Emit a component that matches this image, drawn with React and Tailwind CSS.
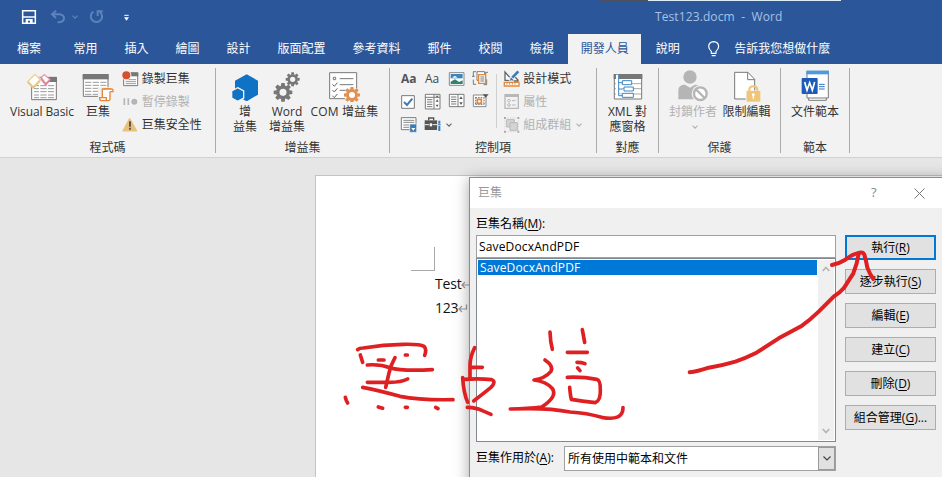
import React from 'react';

const UI = "font-['Open_Sans','Noto_Sans_CJK_TC',sans-serif]";

/* Icon whose drawing units are a third of a pixel. */
function Icon({ x, y, w, h, children, className = '' }) {
  return (
    <svg
      width={w / 3}
      height={h / 3}
      viewBox={`${x} ${y} ${w} ${h}`}
      fill="none"
      className={`block shrink-0 ${className}`}
    >
      {children}
    </svg>
  );
}

function Rows({ x1, x2, ys, c = '#9a9a9a', w = 3 }) {
  return <path d={ys.map((y) => `M${x1} ${y}H${x2}`).join('')} stroke={c} strokeWidth={w} />;
}

function Chevron({ className = '' }) {
  return (
    <svg width="6" height="4" viewBox="0 0 6 4" fill="none" className={`block shrink-0 ${className}`}>
      <path d="M.5 .7 3 3.2 5.5 .7" stroke="currentColor" strokeWidth="1.1" />
    </svg>
  );
}

/* ---------- ribbon icons ---------- */
const VisualBasicIcon = () => (
  <Icon x={75} y={15} w={96} h={90}>
    <path d="M92 34H166V101H92Z" fill="#fff" stroke="#777" strokeWidth="3" />
    <path d="M140 33H168V48H140Z" fill="#777" />
    <Rows x1={99} x2={159} ys={[59, 68, 77, 87, 95]} />
    <path d="M116 55V98M139 55V98" stroke="#fff" strokeWidth="4" />
    <path d="M78 46 102 20 122 41 97 70Z" fill="#f2f2f2" />
    <path d="M81 46 102 25 117 41 97 62Z" fill="#fff" stroke="#ecd08e" strokeWidth="4" />
    <path d="M79 46 97 62 118 42V47L97 69L79 51Z" fill="#e6c579" />
    <path d="M121 34 130 26 146 40 134 53Z" fill="#fff" stroke="#e79db0" strokeWidth="4" />
    <path d="M119 34 134 52 148 40V44L134 60L119 41Z" fill="#e2829b" />
  </Icon>
);

const MacrosIcon = () => (
  <Icon x={247} y={15} w={97} h={93}>
    <path d="M251 26H325V91H251Z" fill="#fff" stroke="#777" strokeWidth="3" />
    <path d="M249 24H327V40H249Z" fill="#777" />
    <Rows x1={256} x2={320} ys={[49, 58, 67, 76, 85]} />
    <path d="M277 45V88M300 45V88" stroke="#fff" strokeWidth="4" />
    <path d="M295 64H344V108H295Z" fill="#f2f2f2" />
    <path d="M308 94V69H331V100Q331 104 326 104H304Q299 103 300 95H320V103" fill="#fff" stroke="#e58636" strokeWidth="4" />
    <path d="M312 69H335Q341 69 340 77H331" fill="#fff" stroke="#e58636" strokeWidth="4" />
  </Icon>
);

const RecordIcon = () => (
  <Icon x={365} y={17} w={50} h={48}>
    <path d="M370 23H412V61H370Z" fill="#fff" stroke="#777" strokeWidth="3" />
    <path d="M392 21H414V33H392Z" fill="#777" />
    <Rows x1={376} x2={407} ys={[43, 49, 55]} />
    <circle cx="378" cy="30" r="15" fill="#f2f2f2" />
    <circle cx="378" cy="30" r="12" fill="#d4502f" />
  </Icon>
);

const PauseIcon = () => (
  <Icon x={365} y={88} w={50} h={48}>
    <path d="M372 101V121M384 101V121" stroke="#b5b5b5" strokeWidth="5" />
    <circle cx="402" cy="111" r="9" fill="#b5b5b5" />
  </Icon>
);

const WarningIcon = () => (
  <Icon x={365} y={157} w={50} h={48}>
    <path d="M388 163 408 198H369Z" fill="#e9c07c" stroke="#e9c07c" strokeWidth="5" strokeLinejoin="round" />
    <path d="M389 170V186M389 189V195" stroke="#444" strokeWidth="5" />
  </Icon>
);

const AddInsIcon = () => (
  <Icon x={15} y={15} w={85} h={92}>
    <path d="M62 25 96 44V86L62 106 27 86V44Z" fill="#0f72c4" />
    <path d="M35 65 53 75V96L35 106 17 96V75Z" fill="#0f72c4" stroke="#f2f2f2" strokeWidth="4" />
  </Icon>
);

function Gear({ cx, cy, r, color, hole = '#f2f2f2' }) {
  return (
    <g>
      <circle cx={cx} cy={cy} r={r * 0.56} stroke={color} strokeWidth={r * 0.36} fill={hole} />
      {[0, 45, 90, 135, 180, 225, 270, 315].map((a) => (
        <path
          key={a}
          d={`M${cx - r * 0.18} ${cy - r}H${cx + r * 0.18}L${cx + r * 0.23} ${cy - r * 0.66}H${cx - r * 0.23}Z`}
          fill={color}
          transform={`rotate(${a} ${cx} ${cy})`}
        />
      ))}
    </g>
  );
}

const GearsIcon = () => (
  <Icon x={145} y={15} w={84} h={97}>
    <Gear cx={204} cy={43} r={21} color="#777" />
    <Gear cx={175} cy={82} r={28} color="#777" />
  </Icon>
);

const ComIcon = () => (
  <Icon x={312} y={15} w={99} h={97}>
    <path d="M317 23H398V101H317Z" fill="#fff" stroke="#777" strokeWidth="3" />
    <path d="M328 37H335V44H328Z" stroke="#777" strokeWidth="3" />
    <path d="M325 58 331 64 340 53M325 75 331 81 340 70M325 92 331 98 340 87" stroke="#666" strokeWidth="3" />
    <path d="M347 41H388M347 59H388M347 76H366" stroke="#777" strokeWidth="3" />
    <circle cx="384" cy="90" r="24" fill="#f6f6f6" />
    <Gear cx={384} cy={90} r={24} color="#e38f4e" hole="#fff" />
  </Icon>
);

const PictureIcon = () => (
  <Icon x={190} y={18} w={51} h={48}>
    <path d="M194 23H238V61H194Z" fill="#fff" stroke="#888" strokeWidth="3" />
    <path d="M198 27H234V40H198Z" fill="#3c87bd" />
    <path d="M203 38Q211 28 218 38Z" fill="#fff" />
    <path d="M198 57V50L211 43 223 51 234 46V57Z" fill="#32826e" />
  </Icon>
);

const BlocksIcon = () => (
  <Icon x={265} y={17} w={50} h={50}>
    <path d="M280 22H303V48H280Z" fill="#fff" stroke="#777" strokeWidth="3" />
    <path d="M277 22H269V37M273 36H265M269 46V60H277M309 45V61H300M313 24H306V30" stroke="#777" strokeWidth="3" />
    <path d="M285 31H306V57H285Z" fill="#fff" stroke="#dc8b42" strokeWidth="4" />
    <Rows x1={290} x2={302} ys={[38, 44, 50]} c="#777" />
  </Icon>
);

const CheckboxIcon = () => (
  <Icon x={48} y={87} w={48} h={48}>
    <path d="M53 92H91V130H53Z" fill="#fff" stroke="#777" strokeWidth="3" />
    <path d="M60 111 69 120 85 101" stroke="#3c7cb5" strokeWidth="6" />
  </Icon>
);

const ComboIcon = () => (
  <Icon x={118} y={85} w={51} h={52}>
    <path d="M122 89H166V133H122ZM148 89V133M122 98H166" fill="#fff" stroke="#777" strokeWidth="3" />
    <Rows x1={127} x2={143} ys={[105, 112, 119, 126]} c="#777" />
    <path d="M152 93H163L157.500 98ZM153 111 157.500 104 162 111ZM153 120 157.500 127 162 120Z" fill="#555" />
  </Icon>
);

const ListIcon = () => (
  <Icon x={190} y={84} w={51} h={52}>
    <path d="M194 88H238V125H194ZM220 88V125" fill="#fff" stroke="#777" strokeWidth="3" />
    <Rows x1={199} x2={215} ys={[96, 103, 110, 117]} c="#777" />
    <path d="M224 102 229 94 234 102ZM224 112 229 120 234 112Z" fill="#555" />
  </Icon>
);

const DateIcon = () => (
  <Icon x={263} y={84} w={51} h={52}>
    <path d="M267 90H305V125H267Z" fill="#fff" stroke="#888" strokeWidth="3" />
    <path d="M273 98H300M273 118H300M274 96V120M299 96V120" stroke="#888" strokeWidth="4" strokeDasharray="5 3" />
    <path d="M279 103H291V115H279Z" fill="#fff" stroke="#df863c" strokeWidth="5" />
    <path d="M295 88H313L304 98Z" fill="#555" />
  </Icon>
);

const DropIcon = () => (
  <Icon x={46} y={155} w={53} h={52}>
    <path d="M50 160H94V196H50Z" fill="#fff" stroke="#777" strokeWidth="3" />
    <Rows x1={56} x2={89} ys={[168, 174]} c="#888" />
    <Rows x1={56} x2={73} ys={[182, 189]} c="#888" />
    <path d="M75 179H96V204H75Z" fill="#3c7cb5" stroke="#f2f2f2" strokeWidth="2" />
    <path d="M80 191H92L86 199Z" fill="#fff" />
  </Icon>
);

const LegacyIcon = () => (
  <Icon x={118} y={155} w={54} h={52}>
    <path d="M120 168H158V197H120Z" fill="#555" />
    <path d="M132 168V161H147V168" stroke="#555" strokeWidth="4" />
    <path d="M120 181H133M143 181H158" stroke="#f2f2f2" strokeWidth="3" />
    <path d="M135 177H142V186H135Z" fill="#fff" />
    <path d="M164 168V203" stroke="#f2f2f2" strokeWidth="12" />
    <path d="M164 169V178M164 184V200" stroke="#3c7cb5" strokeWidth="6" />
    <path d="M160 181H168" stroke="#3c7cb5" strokeWidth="3" />
  </Icon>
);

const DesignIcon = () => (
  <Icon x={355} y={17} w={52} h={51}>
    <path d="M361 23V48H383Z" fill="#fff" stroke="#666" strokeWidth="4" />
    <path d="M402 20 381 42 374 49" stroke="#f2f2f2" strokeWidth="13" />
    <path d="M401 21 383 40" stroke="#3c7cb5" strokeWidth="8" />
    <path d="M379 39 386 46 375 49Z" fill="#3c7cb5" />
    <path d="M392 39 400 47V50H388" stroke="#666" strokeWidth="4" />
    <path d="M359 54H403V65H359Z" fill="#fff" stroke="#e18a3f" strokeWidth="4" />
    <path d="M367 56V61M375 56V61M383 56V61M391 56V61" stroke="#e18a3f" strokeWidth="3" />
  </Icon>
);

const PropsIcon = () => (
  <Icon x={355} y={85} w={52} h={51}>
    <path d="M361 90H401V131H361Z" stroke="#b8b8b8" strokeWidth="4" />
    <path d="M361 93H401" stroke="#b8b8b8" strokeWidth="8" />
    <circle cx="373" cy="108" r="4" stroke="#b8b8b8" strokeWidth="3" />
    <circle cx="373" cy="121" r="4" stroke="#b8b8b8" strokeWidth="3" />
    <path d="M382 108H393M382 121H393" stroke="#b8b8b8" strokeWidth="3" />
  </Icon>
);

const GroupIcon = () => (
  <Icon x={355} y={154} w={52} h={52}>
    <path d="M366 165H389V187H366Z" fill="#d4d4d4" stroke="#b8b8b8" strokeWidth="3" />
    <path d="M376 174H398V197H376Z" fill="#d4d4d4" stroke="#b8b8b8" strokeWidth="3" />
    <path d="M358 157H364V163H358ZM398 157H404V163H398ZM358 198H364V204H358ZM398 198H404V204H398Z" fill="#aaa" />
    <path d="M361 168V194M401 168V194M368 160H394M368 201H394" stroke="#c4c4c4" strokeWidth="2" strokeDasharray="4 4" />
  </Icon>
);

const XmlIcon = () => (
  <Icon x={69} y={20} w={90} h={84}>
    <path d="M73 28H155V101H73Z" fill="#fff" stroke="#777" strokeWidth="3" />
    <path d="M71 26H157V41H71Z" fill="#777" />
    <Rows x1={75} x2={153} ys={[55, 70, 86]} c="#aaa" />
    <path d="M82 28V91H97M82 52H97M82 71H97" stroke="#fff" strokeWidth="8" />
    <path d="M86 27V91H98M86 52H98M86 71H98" stroke="#3f87c3" strokeWidth="3" />
    <path d="M97 46H125V58H97ZM102 65H130V77H102ZM97 84H130V96H97Z" fill="#fff" stroke="#3f87c3" strokeWidth="3" />
  </Icon>
);

const BlockAuthorsIcon = () => (
  <Icon x={260} y={13} w={97} h={100}>
    <circle cx="299" cy="37" r="20" fill="#b5b5b5" />
    <path d="M264 104V77Q264 60 284 60L299 69 314 60Q330 60 334 76V104Z" fill="#b5b5b5" />
    <circle cx="330" cy="87" r="26" fill="#f2f2f2" />
    <circle cx="330" cy="87" r="19" fill="#fff" stroke="#b5b5b5" strokeWidth="7" />
    <path d="M317 74 343 100" stroke="#b5b5b5" strokeWidth="7" />
  </Icon>
);

const RestrictIcon = () => (
  <Icon x={435} y={19} w={84} h={97}>
    <path d="M440 26H480L500 47V106H440Z" fill="#fff" stroke="#777" strokeWidth="3" />
    <path d="M479 26V48H500" stroke="#777" strokeWidth="3" />
    <path d="M473 80H519V116H473Z" fill="#f2f2f2" />
    <path d="M476 82H517V114H476Z" fill="#efc677" />
    <path d="M484 83V77Q485 68 496 68T508 77V83" fill="none" stroke="#efc677" strokeWidth="6" />
    <path d="M496 91V105" stroke="#fff" strokeWidth="4" />
    <circle cx="496" cy="93" r="4" fill="#fff" />
  </Icon>
);

const TemplateIcon = () => (
  <Icon x={628} y={18} w={86} h={95}>
    <path d="M651 27H704V109H651Z" fill="#fff" stroke="#777" strokeWidth="3" />
    <path d="M646 22H710V102H646Z" fill="#fff" stroke="#777" strokeWidth="3" />
    <path d="M644 20H712V31H644Z" fill="#4a9be0" />
    <path d="M682 61H699M682 68H699M682 75H699" stroke="#2f70c4" strokeWidth="3" />
    <rect x="630" y="42" width="48" height="48" rx="3" fill="#1d5bb8" />
    <path d="M639 54 646 79 654 56 662 79 669 54" stroke="#fff" strokeWidth="5" />
  </Icon>
);

/* ---------- ribbon pieces ---------- */
function Group({ width, label, children }) {
  return (
    <div className="flex h-full">
      <div className={`flex flex-col ${width}`}>
        <div className="flex h-[75px]">{children}</div>
        <div className="h-[17px] text-center text-[12px] leading-[17px]">{label}</div>
      </div>
      <div className="mt-1 h-[85px] w-px bg-[#ababab]" />
    </div>
  );
}

function Big({ width, icon, text, disabled, menu }) {
  return (
    <div className={`flex shrink-0 flex-col items-center ${width} ${disabled ? 'text-[#b1b1b1]' : ''}`}>
      <div className="flex h-[40px] items-center pt-1">{icon}</div>
      <span className="whitespace-pre text-center text-[12px] leading-[15px]">{text}</span>
      {menu && <Chevron className="mt-[6px] ml-1" />}
    </div>
  );
}

function Small({ icon, label, disabled, menu }) {
  return (
    <div className={`flex h-[23px] items-center gap-[3px] ${disabled ? 'text-[#b1b1b1]' : ''}`}>
      {icon}
      <span className="whitespace-nowrap text-[12px] leading-4">{label}</span>
      {menu && <Chevron className="ml-[2px]" />}
    </div>
  );
}

const cell = 'flex h-[23px] items-center';

function Ribbon() {
  return (
    <div className="flex h-[94px] border-b border-[#d2d2d2] bg-[#f2f2f2] text-[#333]">
      <Group width="w-[215px]" label="程式碼">
        <Big width="ml-1 w-[76px] tracking-[-0.1px]" icon={<VisualBasicIcon />} text="Visual Basic" />
        <Big width="w-[36px]" icon={<MacrosIcon />} text="巨集" />
        <div className="ml-[6px] pt-[3px]">
          <Small icon={<RecordIcon />} label="錄製巨集" />
          <Small icon={<PauseIcon />} label="暫停錄製" disabled />
          <Small icon={<WarningIcon />} label="巨集安全性" />
        </div>
      </Group>
      <Group width="w-[173px]" label="增益集">
        <Big width="ml-2 w-[42px]" icon={<AddInsIcon />} text={'增\n益集'} />
        <Big width="w-[42px]" icon={<GearsIcon />} text={'Word\n增益集'} />
        <Big width="w-[73px] tracking-[0.15px]" icon={<ComIcon />} text="COM 增益集" />
      </Group>
      <Group width="w-[206px]" label="控制項">
        <div className="ml-[10px] grid h-[72px] grid-cols-[repeat(4,24px)] grid-rows-[repeat(3,23px)] pt-[3px]">
          <div className={`${cell} pl-px text-[12px] font-bold text-[#555]`}>Aa</div>
          <div className={`${cell} pl-px text-[12px] text-[#444]`}>Aa</div>
          <div className={cell}><PictureIcon /></div>
          <div className={cell}><BlocksIcon /></div>
          <div className={cell}><CheckboxIcon /></div>
          <div className={cell}><ComboIcon /></div>
          <div className={cell}><ListIcon /></div>
          <div className={cell}><DateIcon /></div>
          <div className={cell}><DropIcon /></div>
          <div className={`${cell} gap-1 text-[#666]`}><LegacyIcon /><Chevron /></div>
        </div>
        <div className="mt-[10px] h-[54px] w-px bg-[#d0d0d0]" />
        <div className="ml-[6px] pt-[3px]">
          <Small icon={<DesignIcon />} label="設計模式" />
          <Small icon={<PropsIcon />} label="屬性" disabled />
          <Small icon={<GroupIcon />} label="組成群組" disabled menu />
        </div>
      </Group>
      <Group width="w-[61px]" label="對應">
        <Big width="w-full" icon={<XmlIcon />} text={'XML 對\n應窗格'} />
      </Group>
      <Group width="w-[121px]" label="保護">
        <Big width="ml-[7px] w-[54px]" icon={<BlockAuthorsIcon />} text="封鎖作者" disabled menu />
        <Big width="w-[53px]" icon={<RestrictIcon />} text="限制編輯" />
      </Group>
      <Group width="w-[68px]" label="範本">
        <Big width="w-full" icon={<TemplateIcon />} text="文件範本" />
      </Group>
    </div>
  );
}

function TitleBar() {
  return (
    <div className="relative flex h-[34px] items-center bg-[#2b579a] text-[#a9c0e2]">
      <div className="absolute top-0 left-[600px] flex">
        <div className="h-px w-12 bg-[#4c5260]" />
        <div className="h-px w-[193px] bg-[#dcecf8]" />
      </div>
      <Icon x={63} y={27} w={48} h={48} className="ml-[21px]">
        <path d="M68 32H106V70H68Z" stroke="#fff" strokeWidth="4.500" />
        <path d="M68 51H106" stroke="#fff" strokeWidth="4.500" />
        <path d="M77 57H98V70H90V62H84V70H77Z" fill="#fff" />
      </Icon>
      <Icon x={150} y={27} w={48} h={48} className="ml-[13px]">
        <path d="M168 32 156 43 168 54M157 43H177Q192 44 192 55T177 67H173" stroke="#5e83bb" strokeWidth="6" />
      </Icon>
      <Chevron className="ml-[6px] text-[#5e83bb]" />
      <Icon x={267} y={27} w={48} h={48} className="ml-[11px]">
        <path d="M280 35A17 17 0 1 0 300 36M293 48V34H308" stroke="#5e83bb" strokeWidth="6" />
      </Icon>
      <Icon x={369} y={37} w={21} h={27} className="ml-[18px]">
        <path d="M373 44H386" stroke="#fff" strokeWidth="3" />
        <path d="M372 50H387L379.500 60Z" fill="#fff" />
      </Icon>
      <span className="ml-[525px] whitespace-pre text-[12px] leading-4 tracking-[0.1px]">Test123.docm  -  Word</span>
    </div>
  );
}

const tabs = ['常用', '插入', '繪圖', '設計', '版面配置', '參考資料', '郵件', '校閱', '檢視', '開發人員', '說明'];

function Tabs() {
  return (
    <div className="flex h-[30px] items-stretch bg-[#2b579a] text-[12px] leading-[29px] text-white">
      <span className="w-[61px] pl-[17px]">檔案</span>
      <div className="flex gap-[2px]">
        {tabs.map((t) => (
          <span
            key={t}
            className={`px-[12.5px] whitespace-nowrap ${t === '開發人員' ? 'bg-[#f2f2f2] text-[#2b579a]' : ''}`}
          >
            {t}
          </span>
        ))}
      </div>
      <Icon x={258} y={120} w={39} h={54} className="mt-[6px] ml-[15px]">
        <path d="M271 160V154Q263 147 263 139Q264 126 278 125Q292 126 293 139Q293 147 285 154V160ZM272 167H284" stroke="#fff" strokeWidth="3.500" />
      </Icon>
      <span className="ml-[14px]">告訴我您想做什麼</span>
    </div>
  );
}

/* ---------- dialog ---------- */
const buttons = [
  ['執行', 'R', ''],
  ['逐步執行', 'S', ''],
  ['編輯', 'E', ''],
  ['建立', 'C', ''],
  ['刪除', 'D', ''],
  ['組合管理', 'G', '...'],
];

function Key({ k }) {
  return (
    <>
      (<span className="underline underline-offset-2">{k}</span>)
    </>
  );
}

function MacroDialog() {
  return (
    <div className="absolute top-[19px] left-[469px] h-[320px] w-[500px] border border-[#8c8c8c] bg-[#f0f0f0] text-[12px] text-black shadow-[0_2px_14px_rgba(0,0,0,0.35)]">
      <div className="flex h-[30px] items-center bg-white pl-[8px] text-[#999]">
        <span className="w-[393px]">巨集</span>
        <span className="w-[15px] text-[13px] text-[#888]">?</span>
        <svg width="11" height="11" viewBox="0 0 11 11" className="ml-[28px]">
          <path d="M.5 .5 10.500 10.500M10.500 .5 .5 10.500" stroke="#777" strokeWidth="1" />
        </svg>
      </div>
      <div className="flex">
        <div className="ml-[6px] w-[360px]">
          <div className="mt-[7px] h-[20px] leading-[18px]">
            巨集名稱<Key k="M" />:
          </div>
          <div className="h-[23px] border border-[#a0a0a0] bg-white pl-[2px] leading-[21px] tracking-[0.15px]">SaveDocxAndPDF</div>
          <div className="flex h-[184px] border border-[#828790] bg-white p-px">
            <div className="w-[339px] shrink-0">
              <div className="h-[15px] bg-[#0078d7] pl-[2px] leading-[15px] tracking-[0.15px] text-white">SaveDocxAndPDF</div>
            </div>
            <div className="ml-px flex flex-1 flex-col items-center justify-between bg-[#f0f0f0] py-[6px]">
              <svg width="8" height="6" viewBox="0 0 8 6" fill="none">
                <path d="M.7 5 4 1.500 7.300 5" stroke="#b5b5b5" strokeWidth="1.700" />
              </svg>
              <svg width="8" height="6" viewBox="0 0 8 6" fill="none">
                <path d="M.7 1 4 4.500 7.300 1" stroke="#b5b5b5" strokeWidth="1.700" />
              </svg>
            </div>
          </div>
          <div className="mt-1 flex h-[25px] leading-[24px]">
            <span className="w-[88px]">
              巨集作用於<Key k="A" />:
            </span>
            <div className="flex flex-1 border border-[#a0a0a0] bg-white">
              <span className="flex-1 pl-[3px]">所有使用中範本和文件</span>
              <div className="flex w-[17px] items-center justify-center border border-[#999] bg-[#e1e1e1]">
                <svg width="8" height="5" viewBox="0 0 8 5" fill="none">
                  <path d="M.5 .5 4 4 7.500 .5" stroke="#444" strokeWidth="1.200" />
                </svg>
              </div>
            </div>
          </div>
        </div>
        <div className="mt-[27px] ml-[9px] flex w-[91px] flex-col gap-[9px]">
          {buttons.map(([name, k, tail], i) => (
            <div
              key={k}
              className={`flex h-[25px] items-center justify-center whitespace-nowrap bg-[#e1e1e1] ${
                i === 0 ? 'border-2 border-[#0078d7]' : 'border border-[#adadad]'
              }`}
            >
              <span>
                {name}
                <Key k={k} />
                {tail}
              </span>
            </div>
          ))}
        </div>
      </div>
    </div>
  );
}

function Return() {
  return (
    <svg width="10" height="9" viewBox="0 0 10 9" fill="none">
      <path d="M8.500 .5V5H1M4 2 1 5 4 8" stroke="#999" strokeWidth="1.200" />
    </svg>
  );
}

function Page() {
  return (
    <div className="ml-[315px] pt-[17px]">
      <div className="h-[302px] border-t border-l border-[#c3c3c3] bg-white pt-[71px]">
        <div className="ml-[95px] h-6 w-6 border-r border-b border-[#a8a8a8]" />
        <div className="mt-px ml-[119px] text-[14px] leading-6 tracking-[-0.2px] text-[#111]">
          <div className="flex h-6 items-center">Test<Return /></div>
          <div className="flex h-6 items-center">123<Return /></div>
        </div>
      </div>
    </div>
  );
}

/* Freehand red pen marks drawn over the window. */
function Ink() {
  return (
    <svg
      width="942"
      height="477"
      viewBox="0 0 942 477"
      fill="none"
      stroke="#df2022"
      strokeLinecap="round"
      strokeLinejoin="round"
      className="pointer-events-none absolute top-0 left-0"
    >
      <g transform="translate(330 317) scale(.33333)" strokeWidth="11">
        <path d="M83 98Q88 93 100 93Q160 82 220 82Q270 81 282 88Q291 98 284 115" />
        <path d="M91 114 98 136M145 129H162M226 114H232" />
        <path d="M112 144Q150 141 180 152Q215 163 307 158" />
        <path d="M195 122Q182 145 177 168L167 211" />
        <path d="M112 196H177Q215 196 233 186" />
        <path d="M98 211Q150 221 210 238Q270 250 369 248" />
        <path d="M46 241Q48 250 53 258M145 270 158 274M226 271H232M317 271 324 275" />
        <path d="M434 92Q420 120 420 145V184M422 151H457" />
        <path d="M398 182Q401 230 413 256M402 187Q450 184 485 188Q500 194 482 212Q460 230 431 252" />
        <path d="M412 271Q440 272 457 281L483 292" />
        <path d="M660 45Q661 75 667 97M757 38 764 76M712 106H772" />
        <path d="M645 129Q672 147 663 163Q645 184 612 189Q650 193 668 216Q682 240 635 270Q595 275 541 276Q650 271 720 285Q770 288 815 301Q880 313 879 272" />
        <path d="M741 136Q755 136 765 140M743 153 750 161" />
        <path d="M712 181Q760 179 800 187Q812 190 811 220Q812 250 796 257Q755 253 724 247Q721 235 719 211" />
      </g>
      <g transform="translate(622 165) scale(.33333)" strokeWidth="12">
        <path d="M203 622Q225 620 260 608Q300 602 340 590Q370 580 400 565L470 520 540 482Q565 464 590 440L635 395Q655 382 665 370L694 325Q706 295 710 266" />
        <path d="M630 300Q650 296 670 284Q690 268 712 263Q723 260 727 269Q733 290 736 308Q743 327 754 342" />
      </g>
    </svg>
  );
}

export default function App() {
  return (
    <div className={`relative h-[477px] w-[942px] overflow-hidden bg-[#e6e6e6] ${UI}`}>
      <TitleBar />
      <Tabs />
      <Ribbon />
      <div className="relative h-[319px]">
        <Page />
        <MacroDialog />
      </div>
      <Ink />
    </div>
  );
}
